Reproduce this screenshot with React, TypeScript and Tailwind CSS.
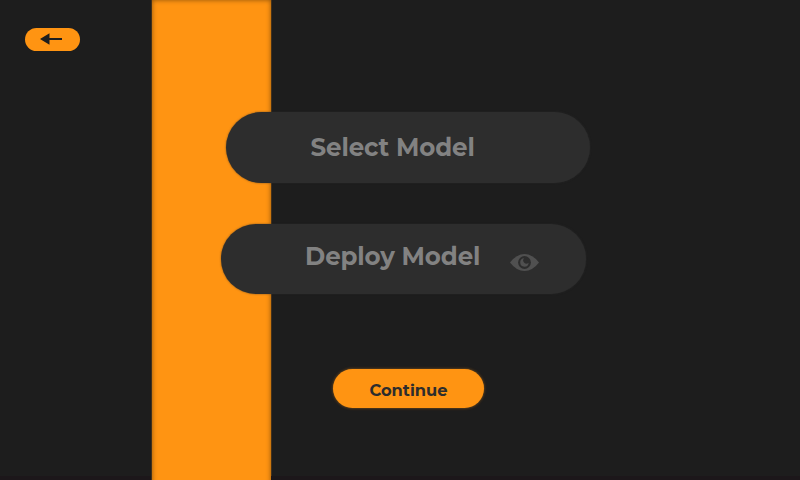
function BackArrow() {
  return (
    <svg className="h-3 w-[22px]" viewBox="0 0 22 12" fill="#1e1e1e" aria-hidden="true">
      <path d="M0 6 9.5 .2V5H22V7H9.5V11.8Z" />
    </svg>
  );
}

function EyeIcon() {
  return (
    <svg className="h-[17px] w-[29px]" viewBox="0 0 29 17" aria-hidden="true">
      <path d="M0 8.5Q6.5 0 14.5 0T29 8.5Q22.5 17 14.5 17T0 8.5Z" fill="#505050" />
      <circle cx="14.5" cy="8.5" r="6.4" fill="#2d2d2d" />
      <path d="M14.2 4.3A3.1 3.1 0 0 0 18.6 8.7A4.2 4.2 0 1 1 14.2 4.3Z" fill="#505050" />
    </svg>
  );
}

export default function App() {
  return (
    <main className="grid h-[480px] w-[800px] overflow-hidden bg-[#1d1d1d] font-['Montserrat','Inter',sans-serif]">
      <div className="col-start-1 row-start-1 ml-[152px] h-[500px] w-[119px] bg-[#ff9412] shadow-[inset_0_0_5px_rgba(0,0,0,0.45),0_0_1px_#ff9412]" />
      <div className="z-10 col-start-1 row-start-1 flex flex-col items-start">
        <button className="mt-7 ml-[25px] flex h-[23px] w-[55px] items-center justify-start rounded-full bg-[#ff9412] pb-px pl-[15px]">
          <BackArrow />
        </button>
        <button className="mt-[61px] ml-[226px] flex h-[71px] w-[364px] items-center rounded-full bg-[#2d2d2d] pb-px pl-[84.5px] shadow-[0_0_2px_rgba(45,45,45,0.7)]">
          <span className="text-[24.5px] font-bold tracking-[-0.1px] whitespace-nowrap text-[#828282]">Select Model</span>
        </button>
        <button className="mt-[41px] ml-[221px] flex h-[70px] w-[365px] items-center rounded-full bg-[#2d2d2d] pl-[84px] shadow-[0_0_2px_rgba(45,45,45,0.7)]">
          <span className="w-[205px] pb-[5px] text-left text-[24.5px] font-bold tracking-[-0.1px] whitespace-nowrap text-[#828282]">Deploy Model</span>
          <span className="pt-[7px]"><EyeIcon /></span>
        </button>
        <button className="mt-[75px] ml-[333px] flex h-[39px] w-[151px] items-center justify-center rounded-full bg-[#ff9412] pt-[3px] text-[16.3px] font-bold text-[#2d2d2d] shadow-[0_0_3px_rgba(255,148,18,0.5)]">
          Continue
        </button>
        <div className="mt-[68px] flex h-[4px] w-full justify-between">
          <span className="h-full w-[151px] bg-[#1c171a]" />
          <span className="h-full w-[529px] bg-[#1c171a]" />
        </div>
      </div>
    </main>
  );
}
